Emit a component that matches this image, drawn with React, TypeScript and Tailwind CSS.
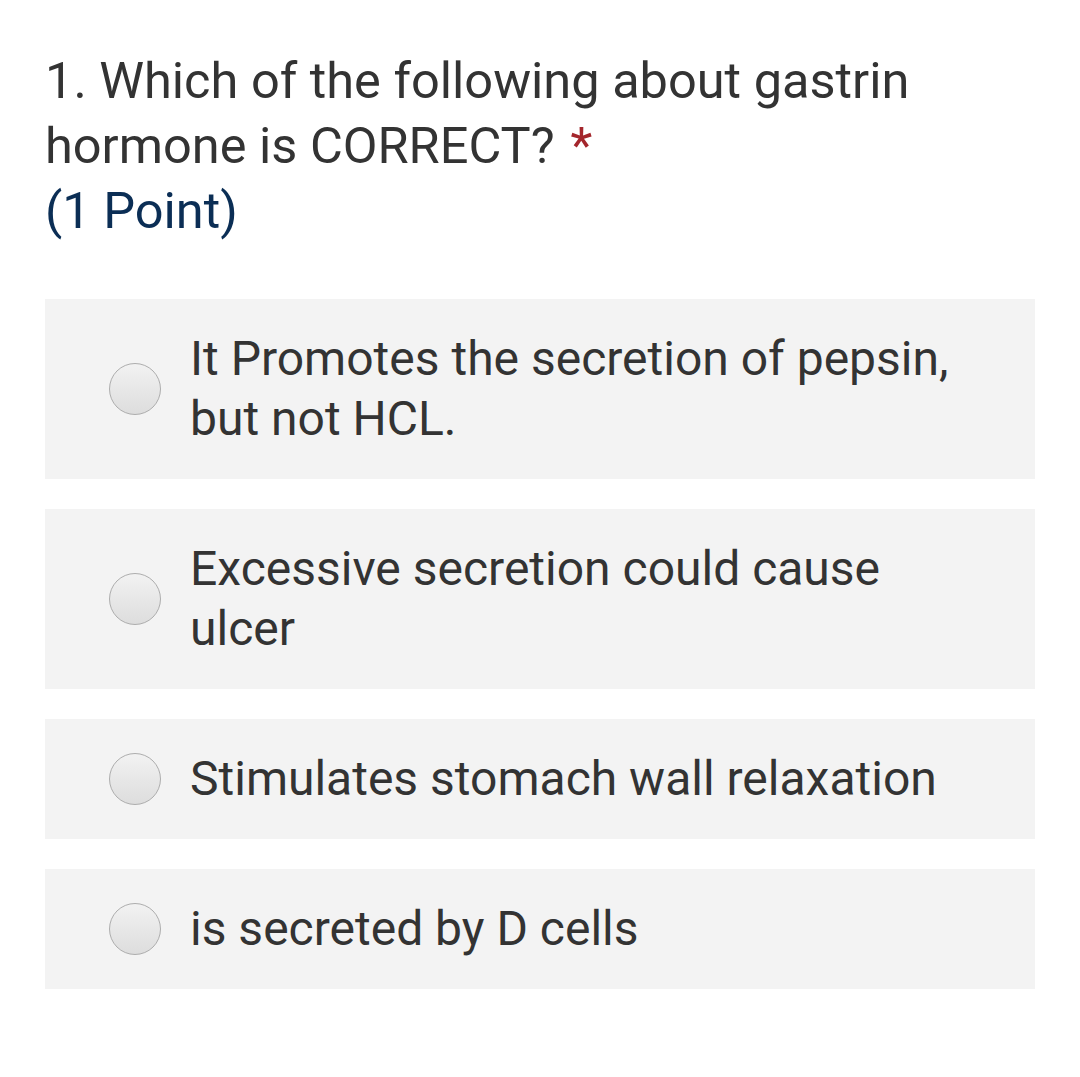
import React from "react";

const OPTIONS = [
  "It Promotes the secretion of pepsin, but not HCL.",
  "Excessive secretion could cause ulcer",
  "Stimulates stomach wall relaxation",
  "is secreted by D cells",
];

function Radio() {
  return (
    <span className="block h-[52px] w-[52px] shrink-0 rounded-full border-[1.5px] border-[#adadad] bg-gradient-to-b from-[#f2f2f2] to-[#dddddd]" />
  );
}

export default function App() {
  return (
    <div className="min-h-[1077px] w-[1080px] bg-white px-[45px] pt-[48px] font-['Roboto',sans-serif] text-[#333333]">
      <div className="text-[50.5px] leading-[65px]">
        <div className="w-[960px]">
          1. Which of the following about gastrin hormone is CORRECT?
          <span className="ml-[16px] text-[#a4262c]">*</span>
        </div>
        <div className="text-[#0b2e55]">(1 Point)</div>
      </div>

      <div className="mt-[56px] flex flex-col gap-[30px]">
        {OPTIONS.map((opt) => (
          <label key={opt} className="flex items-center bg-[#f3f3f3] py-[30px] pl-[64px] pr-[60px]">
            <Radio />
            <span className="ml-[29px] text-[48px] leading-[60px]">{opt}</span>
          </label>
        ))}
      </div>
    </div>
  );
}
